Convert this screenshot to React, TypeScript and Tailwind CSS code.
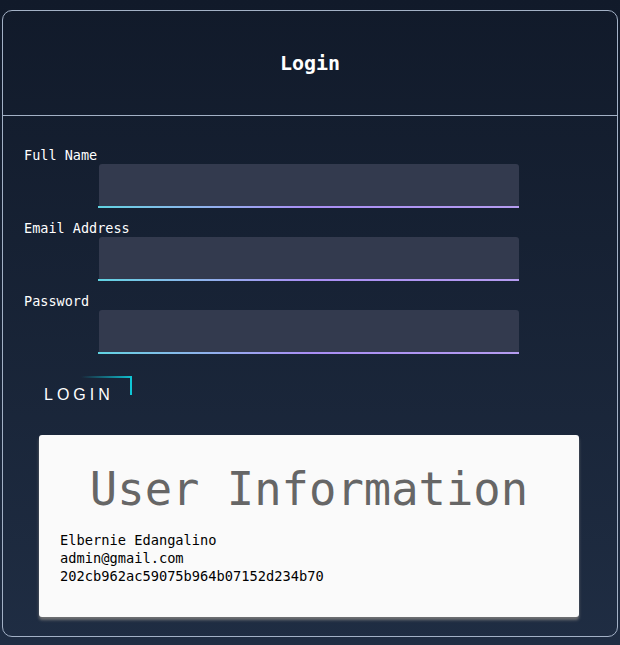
import React from "react";

const mono = "font-['DejaVu_Sans_Mono','Liberation_Mono',monospace]";

type FieldProps = {
  label: string;
  type?: string;
};

function Field({ label, type = "text" }: FieldProps) {
  return (
    <div className="flex flex-col">
      <label className={`${mono} text-[13.5px] leading-[18px] text-white`}>
        {label}
      </label>
      <div className="relative ml-[75px] h-[44px] w-[420px] rounded-t-[3px] bg-[#333a4e]">
        <input
          type={type}
          className="h-full w-full bg-transparent px-3 text-white outline-none"
        />
        <div className="absolute bottom-0 left-[-1px] right-0 h-[2px] bg-gradient-to-r from-[#5fd3e2] via-[#a98ef4] to-[#b59cf0]" />
      </div>
    </div>
  );
}

export default function App() {
  return (
    <div className="min-h-[645px] w-full bg-gradient-to-b from-[#111a2a] to-[#1f2d43] pt-[10px] pl-[2px]">
      <div className="w-[616px] h-[627px] rounded-[10px] border border-[#a3b1c6] flex flex-col">
        {/* Header */}
        <div className="flex h-[105px] items-center justify-center border-b border-[#a3b1c6]">
          <h1 className={`${mono} text-[20px] font-bold text-white`}>Login</h1>
        </div>

        {/* Form */}
        <form className="flex flex-col gap-[11px] pl-[21px] pt-[30px]">
          <Field label="Full Name" />
          <Field label="Email Address" type="email" />
          <Field label="Password" type="password" />
        </form>

        <div className="pl-[21px] pt-[22px]">
          <button className="relative overflow-hidden py-[9px] pl-[20px] pr-[18px] font-['Liberation_Sans',Arial,sans-serif] text-[16px] leading-[20px] tracking-[4px] text-white">
            LOGIN
            <span className="absolute left-[57px] top-0 h-[2px] w-[53px] bg-gradient-to-r from-transparent to-[#0fc6d6]" />
            <span className="absolute right-0 top-0 h-[19px] w-[2px] bg-[#0fc6d6]" />
          </button>
        </div>

        {/* User info card */}
        <div className="ml-[36px] mt-[21px] w-[540px] rounded-[3px] bg-[#fafafa] pb-[32px] pt-[28px] shadow-[0_3px_3px_rgba(120,120,120,0.9)]">
          <h2 className={`${mono} text-center text-[45.5px] leading-[54px] text-[#666666]`}>
            User Information
          </h2>
          <div className={`${mono} mt-[14px] pl-[21px] text-[13.7px] leading-[18px] text-black`}>
            <p>Elbernie Edangalino</p>
            <p>admin@gmail.com</p>
            <p>202cb962ac59075b964b07152d234b70</p>
          </div>
        </div>
      </div>
    </div>
  );
}
